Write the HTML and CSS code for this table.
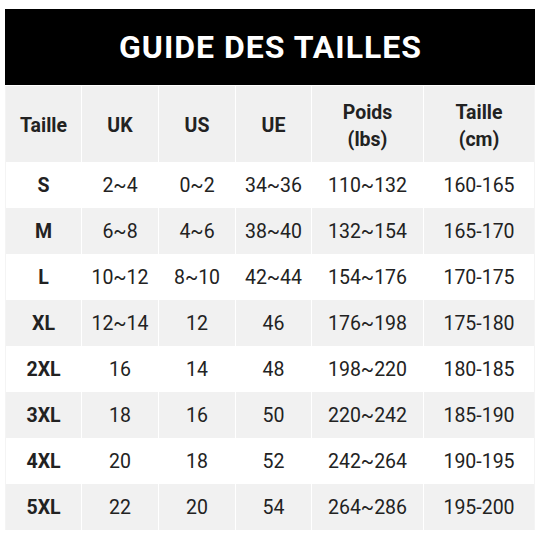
FILE: index.html
```html
<!DOCTYPE html>
<html lang="fr">
<head>
<meta charset="utf-8">
<title>Guide des tailles</title>
<link rel="stylesheet" href="styles.css">
</head>
<body>
<div class="page">
  <div class="title">GUIDE DES TAILLES</div>
  <div class="grid">
    <div class="cell head">Taille</div>
    <div class="cell head">UK</div>
    <div class="cell head">US</div>
    <div class="cell head">UE</div>
    <div class="cell head">Poids<br>(lbs)</div>
    <div class="cell head">Taille<br>(cm)</div>

    <div class="cell size">S</div><div class="cell">2~4</div><div class="cell">0~2</div><div class="cell">34~36</div><div class="cell">110~132</div><div class="cell">160-165</div>
    <div class="cell size alt">M</div><div class="cell alt">6~8</div><div class="cell alt">4~6</div><div class="cell alt">38~40</div><div class="cell alt">132~154</div><div class="cell alt">165-170</div>
    <div class="cell size">L</div><div class="cell">10~12</div><div class="cell">8~10</div><div class="cell">42~44</div><div class="cell">154~176</div><div class="cell">170-175</div>
    <div class="cell size alt">XL</div><div class="cell alt">12~14</div><div class="cell alt">12</div><div class="cell alt">46</div><div class="cell alt">176~198</div><div class="cell alt">175-180</div>
    <div class="cell size">2XL</div><div class="cell">16</div><div class="cell">14</div><div class="cell">48</div><div class="cell">198~220</div><div class="cell">180-185</div>
    <div class="cell size alt">3XL</div><div class="cell alt">18</div><div class="cell alt">16</div><div class="cell alt">50</div><div class="cell alt">220~242</div><div class="cell alt">185-190</div>
    <div class="cell size">4XL</div><div class="cell">20</div><div class="cell">18</div><div class="cell">52</div><div class="cell">242~264</div><div class="cell">190-195</div>
    <div class="cell size alt">5XL</div><div class="cell alt">22</div><div class="cell alt">20</div><div class="cell alt">54</div><div class="cell alt">264~286</div><div class="cell alt">195-200</div>
  </div>
</div>
</body>
</html>
```
FILE: styles.css
```css
html, body {
  margin: 0;
  padding: 0;
  background: #ffffff;
}
body {
  font-family: Roboto, "Liberation Sans", Arial, sans-serif;
  color: #222222;
}
.page {
  padding: 9px 5px 0 5px;
  width: 530px;
}
.title {
  background: #000000;
  color: #ffffff;
  height: 76px;
  display: flex;
  align-items: center;
  justify-content: center;
  font-size: 32px;
  font-weight: 700;
  letter-spacing: 1px;
  padding-left: 1px;
}
.grid {
  margin-top: 1px;
  display: grid;
  grid-template-columns: 76px 77px 77px 76px 112px 112px;
  grid-auto-rows: 46px;
  grid-template-rows: 76px;
}
.cell {
  display: flex;
  align-items: center;
  justify-content: center;
  text-align: center;
  font-size: 19.5px;
  padding-top: 1px;
  border-left: 1.5px solid #ffffff;
  background: #ffffff;
}
.cell:nth-child(6n+1) {
  border-left: 1px solid #f4f4f4;
}
.cell:nth-child(6n) {
  border-right: 1px solid #f4f4f4;
}
.head {
  background: #f0f0f0;
  font-weight: 700;
  font-size: 19.5px;
  line-height: 27px;
  padding-top: 3px;
}
.size {
  font-weight: 700;
}
.alt {
  background: #f1f1f1;
}
```
